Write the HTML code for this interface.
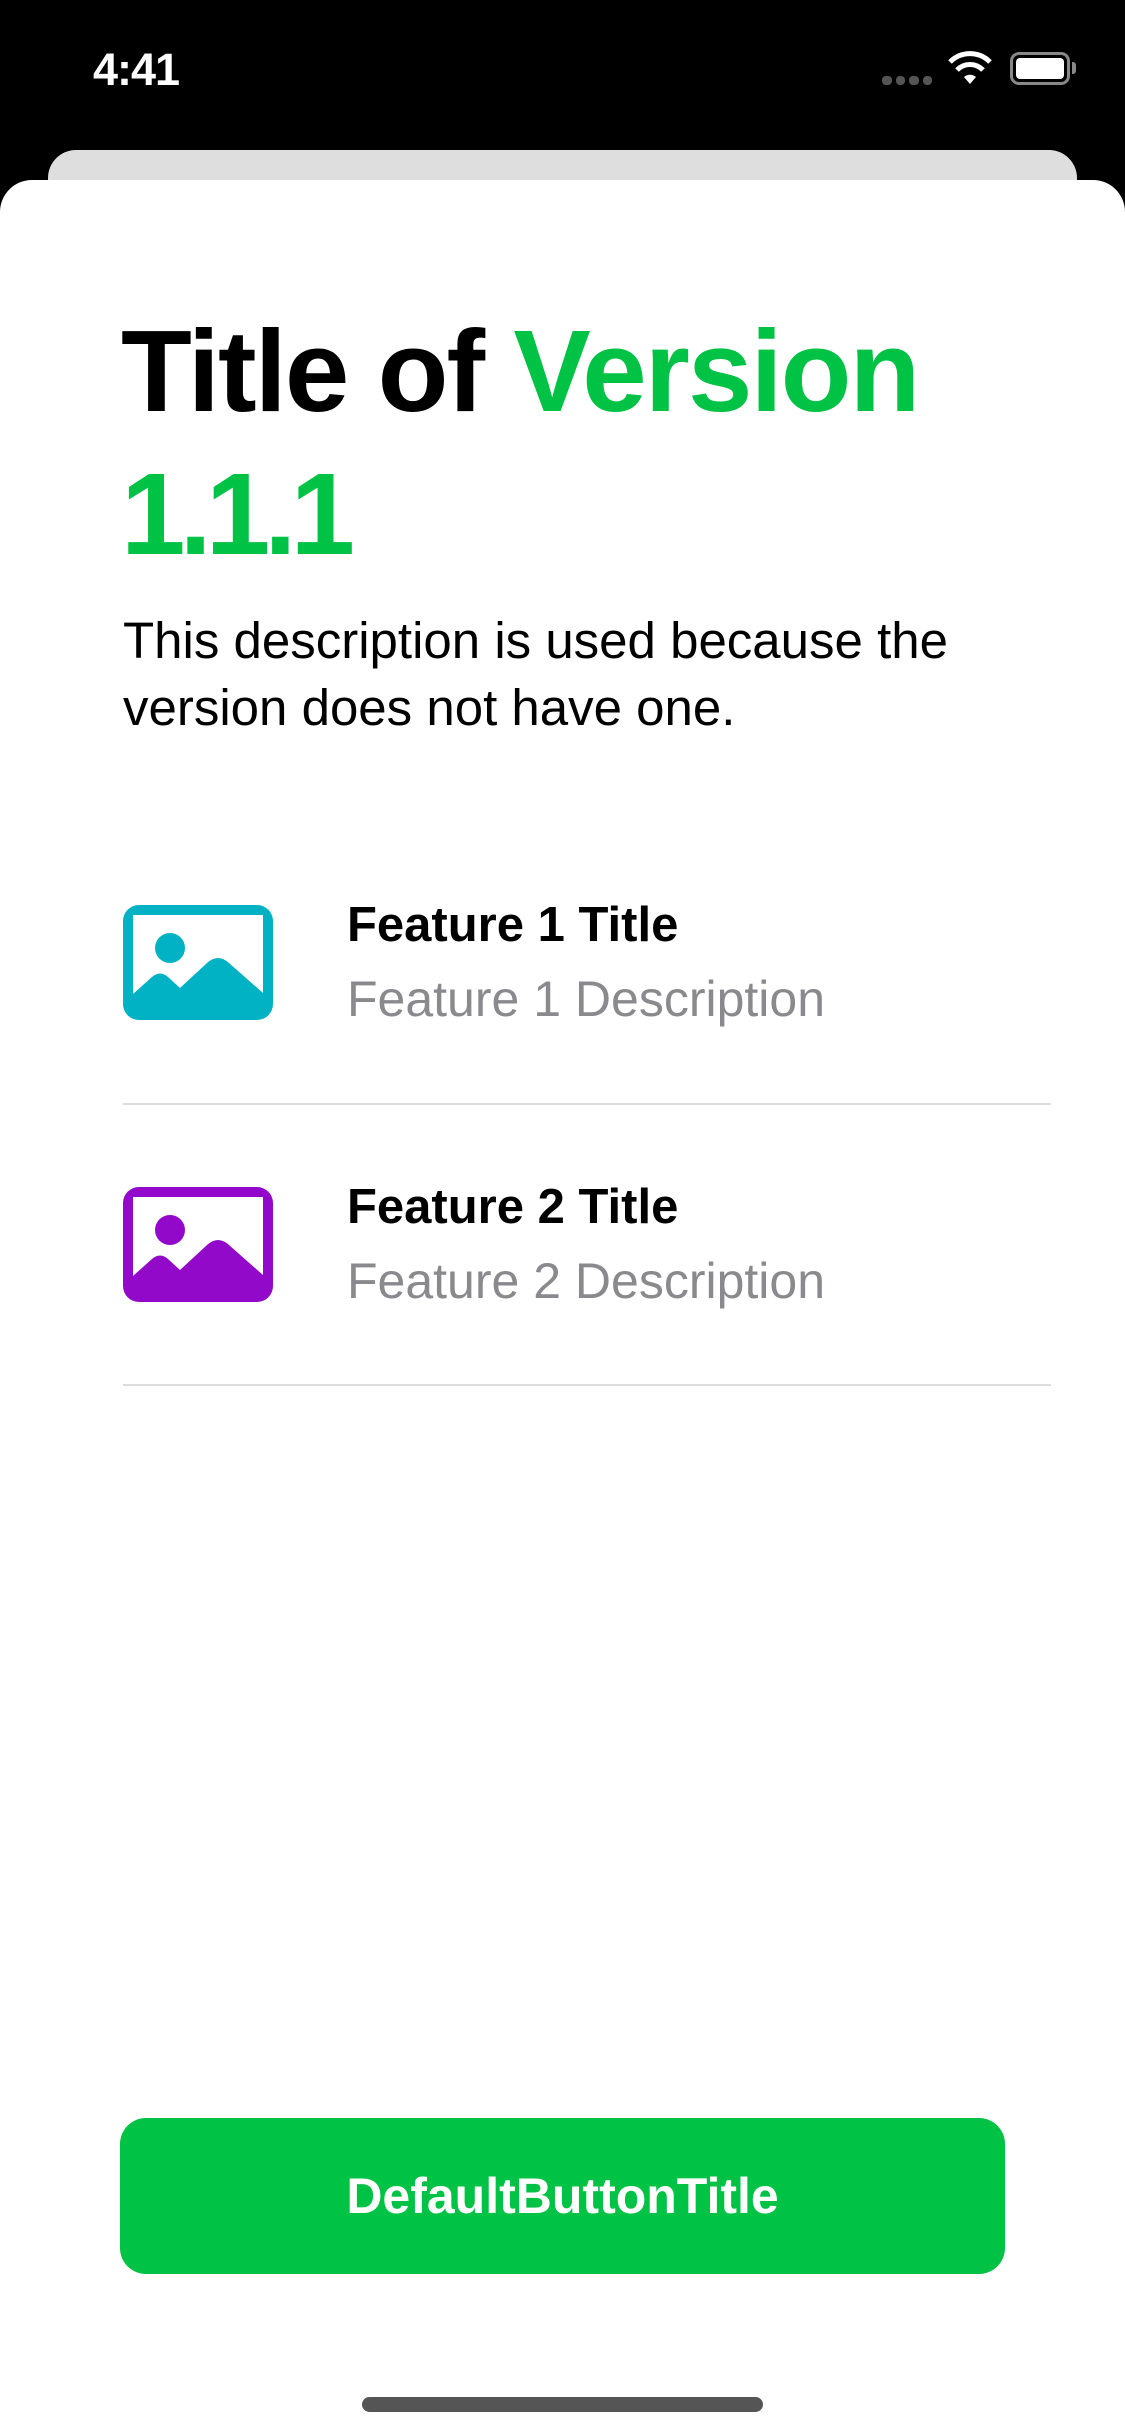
<!DOCTYPE html>
<html><head><meta charset="utf-8"><style>
*{margin:0;padding:0;box-sizing:border-box}
body{width:1125px;height:2436px;background:#000;position:relative;overflow:hidden;font-family:"Liberation Sans",sans-serif}
.abs{position:absolute}
</style></head><body>
<div class="abs" style="left:93px;top:44px;color:#fff;font-size:45px;font-weight:bold;letter-spacing:-1px">4:41</div>
<div class="abs" style="left:882px;top:76px;width:50px;height:9px;display:flex;gap:4px">
<span style="width:10px;height:9px;border-radius:4px;background:#555"></span><span style="width:10px;height:9px;border-radius:4px;background:#555"></span><span style="width:10px;height:9px;border-radius:4px;background:#555"></span><span style="width:10px;height:9px;border-radius:4px;background:#555"></span></div>
<svg class="abs" style="left:946px;top:50px" width="48" height="36" viewBox="0 0 48 36"><path d="M24 34 L30 27 A9 9 0 0 0 18 27 Z" fill="#fff"/><path d="M11 20 A18 18 0 0 1 37 20" stroke="#fff" stroke-width="5" fill="none"/><path d="M4 12 A28 28 0 0 1 44 12" stroke="#fff" stroke-width="5" fill="none"/></svg>
<div class="abs" style="left:1010px;top:52px;width:60px;height:33px;border:3px solid #888;border-radius:9px;padding:3px"><div style="width:100%;height:100%;background:#fff;border-radius:4px"></div></div>
<div class="abs" style="left:1072px;top:62px;width:4px;height:12px;background:#888;border-radius:0 3px 3px 0"></div>
<div class="abs" style="left:48px;top:150px;width:1029px;height:60px;background:#dedede;border-radius:28px 28px 0 0"></div>
<div class="abs" style="left:0;top:180px;width:1125px;height:2256px;background:#fff;border-radius:32px 32px 0 0"></div>
<div class="abs" style="left:121px;top:300px;font-size:116px;font-weight:bold;line-height:143px;letter-spacing:-2px;color:#000;width:960px">Title of <span style="color:#00c244">Version <span style="letter-spacing:-6px">1.1.1</span></span></div>
<div class="abs" style="left:123px;top:607px;font-size:51px;line-height:67px;color:#000;width:960px">This description is used because the<br>version does not have one.</div>
<svg class="abs" style="left:123px;top:905px" width="150" height="115" viewBox="0 0 150 115"><rect width="150" height="115" rx="16" fill="#00b2c3"/><path d="M10 10 H140 V88 L106 58 Q95 48 84 58 L57 83 L45 72 Q37 65 29 72 L10 89 Z" fill="#fff"/><circle cx="47" cy="43" r="15" fill="#00b2c3"/></svg>
<svg class="abs" style="left:123px;top:1187px" width="150" height="115" viewBox="0 0 150 115"><rect width="150" height="115" rx="16" fill="#9209c9"/><path d="M10 10 H140 V88 L106 58 Q95 48 84 58 L57 83 L45 72 Q37 65 29 72 L10 89 Z" fill="#fff"/><circle cx="47" cy="43" r="15" fill="#9209c9"/></svg>
<div class="abs" style="left:347px;top:897px;font-size:49px;font-weight:bold;color:#000">Feature 1 Title</div>
<div class="abs" style="left:347px;top:970px;font-size:50px;color:#8a8a8e">Feature 1 Description</div>
<div class="abs" style="left:123px;top:1103px;width:928px;height:2px;background:#dcdcdc"></div>
<div class="abs" style="left:347px;top:1179px;font-size:49px;font-weight:bold;color:#000">Feature 2 Title</div>
<div class="abs" style="left:347px;top:1252px;font-size:50px;color:#8a8a8e">Feature 2 Description</div>
<div class="abs" style="left:123px;top:1384px;width:928px;height:2px;background:#dcdcdc"></div>
<div class="abs" style="left:120px;top:2118px;width:885px;height:156px;background:#00c244;border-radius:26px;color:#fff;font-size:50px;font-weight:bold;display:flex;align-items:center;justify-content:center">DefaultButtonTitle</div>
<div class="abs" style="left:362px;top:2397px;width:401px;height:15px;background:#555;border-radius:8px"></div>
</body></html>
